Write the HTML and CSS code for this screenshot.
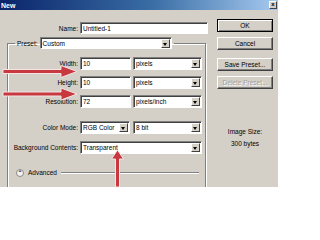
FILE: index.html
```html
<!DOCTYPE html>
<html lang="en">
<head>
    <meta charset="UTF-8">
    <title>New</title>
    <link rel="stylesheet" href="styles.css">
</head>
<body>
    <div class="dialog">
        <div class="titlebar">
            <span class="title">New</span>
            <span class="close">x</span>
        </div>

        <div class="content">
            <!-- Left: document settings -->
            <div class="main">
                <div class="row name-row">
                    <span class="label">Name:</span>
                    <div class="field name-field">Untitled-1</div>
                </div>

                <fieldset class="group">
                    <legend class="legend">
                        <span class="preset">
                            <span class="preset-label">Preset:</span>
                            <span class="select preset-select"><span class="value">Custom</span><span class="arrow"></span></span>
                        </span>
                    </legend>

                    <div class="row first-row">
                        <span class="label">Width:</span>
                        <div class="field num">10</div>
                        <div class="select unit"><span class="value">pixels</span><span class="arrow"></span></div>
                    </div>
                    <div class="row">
                        <span class="label">Height:</span>
                        <div class="field num">10</div>
                        <div class="select unit"><span class="value">pixels</span><span class="arrow"></span></div>
                    </div>
                    <div class="row">
                        <span class="label">Resolution:</span>
                        <div class="field num">72</div>
                        <div class="select unit"><span class="value">pixels/inch</span><span class="arrow"></span></div>
                    </div>
                    <div class="row mode-row">
                        <span class="label">Color Mode:</span>
                        <div class="select mode"><span class="value">RGB Color</span><span class="arrow"></span></div>
                        <div class="select unit"><span class="value">8 bit</span><span class="arrow"></span></div>
                    </div>
                    <div class="row bg-row">
                        <span class="label">Background Contents:</span>
                        <div class="select bg"><span class="value">Transparent</span><span class="arrow"></span></div>
                    </div>

                    <div class="advanced">
                        <span class="toggle">&#710;</span>
                        <span class="adv-text">Advanced</span>
                        <span class="rule"></span>
                    </div>
                </fieldset>
            </div>

            <!-- Right: buttons and size info -->
            <div class="side">
                <div class="btn btn-default">OK</div>
                <div class="btn">Cancel</div>
                <div class="btn btn-gap">Save Preset...</div>
                <div class="btn btn-disabled">Delete Preset...</div>
                <div class="size-info">
                    <div>Image Size:</div>
                    <div>300 bytes</div>
                </div>
            </div>
        </div>
    </div>

    <!-- Red callout arrows drawn over the dialog -->
    <svg class="arrows" width="320" height="240" viewBox="0 0 320 240">
        <polygon points="3,69.5 61,69.5 61,65.5 77,71.5 61,77.5 61,73.5 3,73.5"/>
        <polygon points="3,92 61,92 61,88 77,94 61,100 61,96 3,96"/>
        <polygon points="117.5,150 123.5,159 119.5,159 119.5,187 115.5,187 115.5,159 111.5,159"/>
    </svg>
</body>
</html>
```

FILE: styles.css
```css
body {
    margin: 0;
    background-color: #ffffff;
    font-family: "Liberation Sans", Arial, sans-serif;
    font-size: 6.5px;
    color: #000000;
}

.dialog {
    width: 278px;
    height: 187px;
    background-color: #d4d0c8;
    overflow: hidden;
}

.titlebar {
    height: 10px;
    padding: 0 1px 0 1px;
    display: flex;
    align-items: center;
    justify-content: space-between;
    background: linear-gradient(to right, #0a246a, #3a6ea5 55%, #a6caf0);
}

.title {
    color: #ffffff;
    font-weight: bold;
    font-size: 7px;
}

.close {
    width: 8px;
    height: 8px;
    box-sizing: border-box;
    background-color: #d4d0c8;
    border: 1px solid;
    border-color: #ffffff #404040 #404040 #ffffff;
    font-size: 6px;
    line-height: 5px;
    text-align: center;
    font-weight: bold;
}

.content {
    display: flex;
}

.main {
    width: 208px;
}

.row {
    display: flex;
    align-items: center;
    height: 13px;
    margin-top: 6px;
}

.label {
    width: 72px;
    padding-right: 2px;
    box-sizing: border-box;
    text-align: right;
    white-space: nowrap;
}

.name-row {
    margin-top: 12px;
    height: 12px;
}

.name-row .label {
    width: 80px;
}

.field,
.select {
    height: 100%;
    box-sizing: border-box;
    background-color: #ffffff;
    border: 1px solid;
    border-color: #808080 #ffffff #ffffff #808080;
    box-shadow: inset 1px 1px 0 #404040;
    display: flex;
    align-items: center;
    padding-left: 2px;
    white-space: nowrap;
}

.name-field {
    width: 128px;
    flex: none;
}

.num {
    width: 51px;
    margin-right: 2px;
}

.select {
    padding-right: 1px;
}

.select .value {
    flex: 1;
}

.arrow {
    width: 9px;
    height: 9px;
    box-sizing: border-box;
    background-color: #d4d0c8;
    border: 1px solid;
    border-color: #ffffff #404040 #404040 #ffffff;
    position: relative;
}

.arrow::after {
    content: "";
    position: absolute;
    left: 1px;
    top: 3px;
    border-left: 2.5px solid transparent;
    border-right: 2.5px solid transparent;
    border-top: 3px solid #000000;
}

.unit {
    width: 69px;
}

.mode {
    width: 50px;
    margin-right: 3px;
}

.bg {
    width: 122px;
}

.group {
    margin: 3px 2px 0 7px;
    padding: 0 0 20px 0;
    min-width: 0;
    border: 1px solid #808080;
    box-shadow: inset 1px 1px 0 #ffffff, 1px 1px 0 #ffffff;
}

.legend {
    margin-left: 7px;
    padding: 0 2px;
}

.preset {
    display: flex;
    align-items: center;
    height: 12px;
}

.preset-label {
    margin-right: 2px;
}

.preset-select {
    width: 132px;
}

.first-row {
    margin-top: 8px;
}

.mode-row {
    margin-top: 13px;
}

.bg-row {
    margin-top: 7px;
}

.advanced {
    display: flex;
    align-items: center;
    height: 9px;
    margin: 14px 6px 0 8px;
}

.toggle {
    width: 8px;
    height: 8px;
    box-sizing: border-box;
    border-radius: 50%;
    background-color: #f4f3ee;
    border: 1px solid #8a8a8a;
    font-size: 7px;
    line-height: 8px;
    text-align: center;
    font-weight: bold;
}

.adv-text {
    margin: 0 4px;
}

.rule {
    flex: 1;
    height: 0;
    border-top: 1px solid #808080;
    border-bottom: 1px solid #ffffff;
}

.side {
    flex: 1;
    padding: 9px 0 0 9px;
    display: flex;
    flex-direction: column;
}

.btn {
    width: 56px;
    height: 13px;
    box-sizing: border-box;
    margin-bottom: 5px;
    border: 1px solid;
    border-color: #ffffff #404040 #404040 #ffffff;
    box-shadow: inset -1px -1px 0 #808080;
    display: flex;
    align-items: center;
    justify-content: center;
    white-space: nowrap;
}

.btn-default {
    border-color: #000000;
    box-shadow: inset 1px 1px 0 #ffffff, inset -1px -1px 0 #808080;
}

.btn-gap {
    margin-top: 3px;
}

.btn-disabled {
    color: #a0a0a0;
    text-shadow: 1px 1px 0 #ffffff;
}

.size-info {
    width: 56px;
    margin-top: 32px;
    text-align: center;
    line-height: 12px;
}

.arrows {
    position: absolute;
    top: 0;
    left: 0;
    pointer-events: none;
}

.arrows polygon {
    fill: #c8383f;
    stroke: #f4e4e4;
    stroke-width: 1;
}
```
